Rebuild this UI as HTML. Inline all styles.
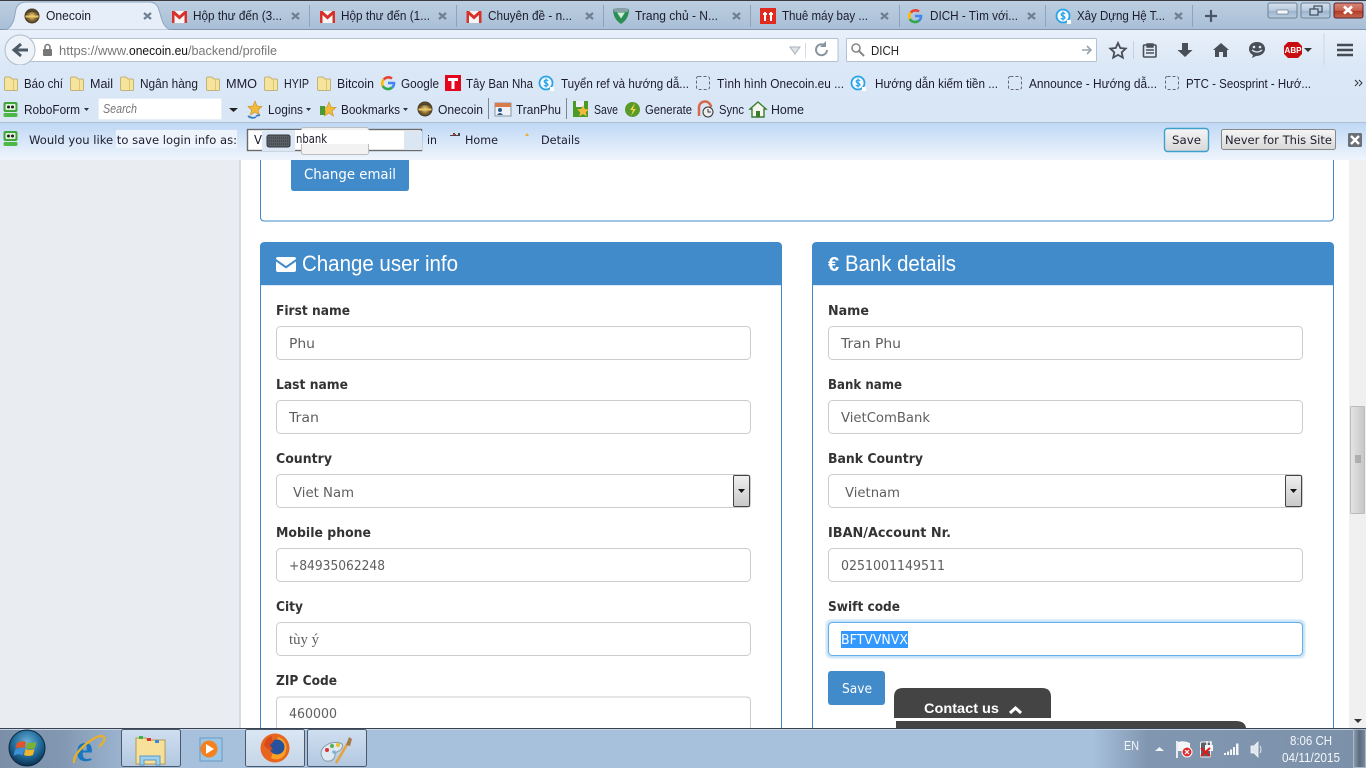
<!DOCTYPE html>
<html lang="vi"><head><meta charset="utf-8"><title>Onecoin</title>
<style>
html,body{margin:0;padding:0;width:1366px;height:768px;overflow:hidden;background:#fff}
svg{display:block}
.c{font:13px "Liberation Sans","Noto Sans CJK SC",sans-serif;fill:#1c1c2c}
.d{font:11.500px "DejaVu Sans",sans-serif;fill:#1c1c2c}
.l{font:bold 13.500px "DejaVu Sans",sans-serif;fill:#333}
.i{font:13.500px "DejaVu Sans",sans-serif;fill:#5e5e5e}
.h{font:22px "Liberation Sans",sans-serif;fill:#fff}
.b{font:13.500px "DejaVu Sans",sans-serif;fill:#fff}
.t{font:12.500px "Liberation Sans",sans-serif;fill:#f4f8fc}
.x{stroke:#6f7f90;stroke-width:2.200;fill:none}
</style></head><body>
<svg width="1366" height="768" viewBox="0 0 1366 768" xmlns="http://www.w3.org/2000/svg">
<defs>
<linearGradient id="strip" x1="0" y1="0" x2="0" y2="1"><stop offset="0" stop-color="#bdcfe1"/><stop offset="1" stop-color="#a9bfd7"/></linearGradient>
<linearGradient id="bar" x1="0" y1="0" x2="0" y2="1"><stop offset="0" stop-color="#e8f0fa"/><stop offset="1" stop-color="#dce8f6"/></linearGradient>
<linearGradient id="note" x1="0" y1="0" x2="0" y2="1"><stop offset="0" stop-color="#bfd8f5"/><stop offset="1" stop-color="#eff5fc"/></linearGradient>
<linearGradient id="task" x1="0" y1="0" x2="1" y2="0"><stop offset="0" stop-color="#7b8fa8"/><stop offset=".045" stop-color="#8298b2"/><stop offset=".11" stop-color="#a7c0dc"/><stop offset=".44" stop-color="#a7c0dc"/><stop offset=".6" stop-color="#a7c0dc"/><stop offset=".8" stop-color="#a7c0dc"/><stop offset=".84" stop-color="#8197b1"/><stop offset="1" stop-color="#7c90a9"/></linearGradient>
<linearGradient id="tb" x1="0" y1="0" x2="0" y2="1"><stop offset="0" stop-color="#cfdff0"/><stop offset="1" stop-color="#b2c8e0"/></linearGradient>
<linearGradient id="sel" x1="0" y1="0" x2="0" y2="1"><stop offset="0" stop-color="#f0f0f0"/><stop offset="1" stop-color="#c8c8c8"/></linearGradient>
<linearGradient id="btn" x1="0" y1="0" x2="0" y2="1"><stop offset="0" stop-color="#f5f5f5"/><stop offset="1" stop-color="#d8d8d8"/></linearGradient>
<linearGradient id="thumb" x1="0" y1="0" x2="1" y2="0"><stop offset="0" stop-color="#e4e4e4"/><stop offset="1" stop-color="#c6c6c6"/></linearGradient>
<linearGradient id="sd" x1="0" y1="0" x2="1" y2="0"><stop offset="0" stop-color="#8d9eb2"/><stop offset=".5" stop-color="#5b6b7e"/><stop offset="1" stop-color="#7b8b9e"/></linearGradient>
<linearGradient id="win" x1="0" y1="0" x2="0" y2="1"><stop offset="0" stop-color="#d4e0ee"/><stop offset=".5" stop-color="#b8cade"/><stop offset=".55" stop-color="#9db4cd"/><stop offset="1" stop-color="#b8cde2"/></linearGradient>
<linearGradient id="red" x1="0" y1="0" x2="0" y2="1"><stop offset="0" stop-color="#d98a7c"/><stop offset=".5" stop-color="#c8604e"/><stop offset=".55" stop-color="#b23a26"/><stop offset="1" stop-color="#c66a52"/></linearGradient>
<radialGradient id="coin" cx=".5" cy=".5" r=".5"><stop offset="0" stop-color="#f0d98c"/><stop offset=".6" stop-color="#8a6a2c"/><stop offset="1" stop-color="#3a3226"/></radialGradient>
<radialGradient id="orb" cx=".5" cy=".35" r=".65"><stop offset="0" stop-color="#6fb4d8"/><stop offset=".6" stop-color="#1f6a9a"/><stop offset="1" stop-color="#0c2e4c"/></radialGradient>
<symbol id="fold" viewBox="0 0 14 15" overflow="visible"><path d="M.5 2.500Q.5 1 2 1h4l2 2h4.500q1 0 1 1v9.500q0 1-1 1H2q-1.500 0-1.500-1.500z" fill="#f6e39c" stroke="#c2b27c"/><path d="M9.500 3v11" stroke="#dcc672"/></symbol>
<symbol id="gm" viewBox="0 0 15 13" overflow="visible"><path d="M0 1h15v12H0z" fill="#f6f6f6"/><path d="M0 13V1h2.500l5 4.500 5-4.500H15v12h-2.500V5l-5 4.500L2.500 5v8z" fill="#d8302a"/></symbol>
<symbol id="dash" viewBox="0 0 14 14" overflow="visible"><rect x=".5" y=".5" width="13" height="13" rx="2" fill="none" stroke="#667" stroke-dasharray="3 2"/></symbol>
<symbol id="sc" viewBox="0 0 16 16" overflow="visible"><circle cx="8" cy="8" r="6.500" fill="#f4f9fe" stroke="#29a3e8" stroke-width="1.800"/><rect x="12" y="12" width="4" height="4" fill="#fff"/><path d="M10.200 5.800Q8 4.300 6.300 5.800 6 7.500 8 8t1.800 2.300Q8 11.800 5.800 10.300M8 3.500v9" stroke="#29a3e8" stroke-width="1.200" fill="none"/></symbol>
<symbol id="gg" viewBox="0 0 16 16" overflow="visible"><path d="M3.800 4.500A6 6 0 0 1 12 3.500" stroke="#e8412f" stroke-width="2.600" fill="none"/><path d="M2.800 11A6 6 0 0 1 3.800 4.500" stroke="#f7bb08" stroke-width="2.600" fill="none"/><path d="M12 12.500A6 6 0 0 1 2.800 11" stroke="#2fa84f" stroke-width="2.600" fill="none"/><path d="M8 8h6q.2 3-2 4.500" stroke="#4285f4" stroke-width="2.600" fill="none"/></symbol>
<symbol id="rf" viewBox="0 0 15 15" overflow="visible"><rect x=".5" y="0" width="14" height="10" rx="2" fill="#3fa63a"/><rect x="2.500" y="2" width="10" height="6" rx="1" fill="#dff3d8"/><circle cx="5.500" cy="5" r="1.500" fill="#222"/><circle cx="9.500" cy="5" r="1.500" fill="#222"/><rect x=".5" y="11" width="14" height="4" rx="1.500" fill="#4cb944"/></symbol>
<symbol id="cn" viewBox="0 0 16 16" overflow="visible"><circle cx="8" cy="8" r="7.500" fill="url(#coin)"/><path d="M1.500 7.500h13v2h-13z" fill="#e9c767"/><path d="M3 4.500q5-2.500 10 0" stroke="#4a4030" stroke-width="1.500" fill="none"/></symbol>
</defs>

<!-- page background -->
<rect width="1366" height="768" fill="#fff"/>
<rect x="0" y="160" width="239" height="568" fill="#e9edf1"/>
<rect x="239" y="160" width="2" height="568" fill="#d3dbe3"/>
<rect x="1349" y="160" width="17" height="568" fill="#f0f0f0"/>
<rect x="1350.500" y="406.500" width="14" height="107" rx="1" fill="url(#thumb)" stroke="#bcbcbc"/>
<path d="M1355 456h6M1355 458h6M1355 460h6M1355 462h6" stroke="#888"/>
<path d="M1354 719h8l-4 4z" fill="#333"/>

<!-- tab strip -->
<rect width="1366" height="29" fill="url(#strip)"/>
<rect width="1366" height="1" fill="#3a3c40"/>
<rect y="29" width="1366" height="1" fill="#8094ab"/>
<path d="M4 30Q11 29 14 19L16 9Q18 2 27 2H149Q157 2 159 10L162 20Q165 29 172 30z" fill="#e5eef9" stroke="#8fa5bd"/>
<g stroke="#8fa4ba"><path d="M309.500 5v22M456.500 5v22M603.500 5v22M750.500 5v22M899.500 5v22M1045.500 5v22M1192.500 5v22"/></g>
<use href="#cn" x="24" y="8" width="16" height="16"/>
<use href="#gm" x="172" y="10" width="15" height="13"/>
<use href="#gm" x="320" y="10" width="15" height="13"/>
<use href="#gm" x="466" y="10" width="16" height="13"/>
<path d="M613 9q8-2 16 0 0 10-8 15-8-5-8-15z" fill="#2b8f55"/><path d="M613 9q8-2 16 0l-1.500 3h-13z" fill="#8aa0a8"/><path d="M617 12.500h8l-4 6z" fill="#cfeeda"/>
<rect x="760" y="8" width="16" height="16" fill="#e02a1e"/><path d="M765 12v9M771 12v9M763 14h4M769 14h4" stroke="#fff" stroke-width="2"/>
<use href="#gg" x="907" y="8" width="16" height="16"/>
<use href="#sc" x="1055" y="8" width="16" height="16"/>
<g class="c">
<text x="46" y="20" textLength="45" lengthAdjust="spacingAndGlyphs">Onecoin</text>
<text x="193" y="20" textLength="89" lengthAdjust="spacingAndGlyphs">Hộp thư đến (3...</text>
<text x="341" y="20" textLength="89" lengthAdjust="spacingAndGlyphs">Hộp thư đến (1...</text>
<text x="488" y="20" textLength="84" lengthAdjust="spacingAndGlyphs">Chuyên đề - n...</text>
<text x="635" y="20" textLength="83" lengthAdjust="spacingAndGlyphs">Trang chủ - N...</text>
<text x="782" y="20" textLength="86" lengthAdjust="spacingAndGlyphs">Thuê máy bay ...</text>
<text x="930" y="20" textLength="88" lengthAdjust="spacingAndGlyphs">DICH - Tìm với...</text>
<text x="1077" y="20" textLength="88" lengthAdjust="spacingAndGlyphs">Xây Dựng Hệ T...</text>
</g>
<path class="x" d="M144 13l7 6M151 13l-7 6M292 13l7 6M299 13l-7 6M439 13l7 6M446 13l-7 6M586 13l7 6M593 13l-7 6M733 13l7 6M740 13l-7 6M881 13l7 6M888 13l-7 6M1028 13l7 6M1035 13l-7 6M1175 13l7 6M1182 13l-7 6"/>
<path d="M1211 10v12M1205 16h12" stroke="#4a5568" stroke-width="2.200"/>
<!-- window buttons -->
<rect x="1268" y="3" width="29" height="15" rx="2" fill="url(#win)" stroke="#6e7f92"/>
<rect x="1277" y="10" width="11" height="4" fill="#f5f8fb" stroke="#5a6a7a" stroke-width=".6"/>
<rect x="1301" y="3" width="29" height="15" rx="2" fill="url(#win)" stroke="#6e7f92"/>
<rect x="1314" y="6" width="8" height="6" fill="none" stroke="#3e4d5e" stroke-width="1.200"/><rect x="1310" y="9" width="8" height="6" fill="#c3d3e3" stroke="#3e4d5e" stroke-width="1.200"/>
<rect x="1334" y="3" width="29" height="15" rx="2" fill="url(#red)" stroke="#5a2030"/>
<path d="M1344 6.500l8 7M1352 6.500l-8 7" stroke="#fff" stroke-width="2.800"/>

<!-- nav toolbar -->
<rect y="30" width="1366" height="35" fill="url(#bar)"/>
<rect x="30" y="38.500" width="808" height="23" rx="1" fill="#fff" stroke="#b3c2d2"/>
<circle cx="20" cy="50" r="15" fill="#eef3f9" stroke="#aebccb"/>
<path d="M28 50H16M21 44l-7 6 7 6" stroke="#4d5a68" stroke-width="3" fill="none"/>
<rect x="43" y="49" width="9" height="7" rx="1" fill="#777"/><path d="M45 49v-2a2.500 2.500 0 0 1 5 0v2" stroke="#777" stroke-width="1.500" fill="none"/>
<g class="c">
<text x="59" y="55" textLength="70" lengthAdjust="spacingAndGlyphs" style="fill:#777">https://www.</text>
<text x="129" y="55" textLength="59" lengthAdjust="spacingAndGlyphs" style="fill:#111">onecoin.eu</text>
<text x="188" y="55" textLength="89" lengthAdjust="spacingAndGlyphs" style="fill:#777">/backend/profile</text>
</g>
<path d="M790 47h10l-5 7z" fill="#dfe3e8" stroke="#a8b0ba"/>
<path d="M805.500 43v15" stroke="#d4dbe3"/>
<path d="M827 50a5.500 5.500 0 1 1-2-4.500" stroke="#8a949e" stroke-width="2" fill="none"/><path d="M826 41v6h-6z" fill="#8a949e"/>
<rect x="846.500" y="38.500" width="250" height="23" rx="1" fill="#fff" stroke="#b3c2d2"/>
<circle cx="856" cy="48" r="4" fill="none" stroke="#888" stroke-width="1.600"/><path d="M859 51l5 5" stroke="#888" stroke-width="2"/>
<text class="c" x="871" y="55" textLength="28" lengthAdjust="spacingAndGlyphs" style="fill:#222">DICH</text>
<path d="M1082 50h9M1087 46l4 4-4 4" stroke="#9aa3ad" stroke-width="1.600" fill="none"/>
<path d="M1118 43l2.300 5 5.400.6-4 3.700 1.100 5.300-4.800-2.700-4.800 2.700 1.100-5.300-4-3.700 5.400-.6z" fill="none" stroke="#4a4f57" stroke-width="1.800"/>
<path d="M1133.500 41v18" stroke="#c5d0dc"/>
<rect x="1143.500" y="45" width="12.500" height="12" rx="1" fill="none" stroke="#4a4f57" stroke-width="1.600"/><path d="M1147 44h6v3h-6zM1146 50h8M1146 53h8" stroke="#4a4f57" stroke-width="1.400" fill="#4a4f57"/>
<path d="M1182 43h6v7h4.500l-7.500 7-7.500-7h4.500z" fill="#4a4f57"/>
<path d="M1221 43l8 7h-2v7h-4v-5h-4v5h-4v-7h-2z" fill="#4a4f57"/>
<path d="M1257 42c-5 0-8 3-8 7 0 3 2 5 4 6l-1 3 4-2c5 0 9-3 9-7s-3-7-8-7z" fill="#4a4f57"/><circle cx="1254" cy="47" r="1.300" fill="#dce8f6"/><circle cx="1260" cy="47" r="1.300" fill="#dce8f6"/><path d="M1252 50q5 4 10 0" stroke="#dce8f6" stroke-width="1.300" fill="none"/>
<path d="M1288 42h10l4 4v8l-4 4h-10l-4-4v-8z" fill="#c80c10"/>
<text x="1284.500" y="53" textLength="17" lengthAdjust="spacingAndGlyphs" style="font:bold 8.500px 'Liberation Sans',sans-serif;fill:#fff">ABP</text>
<path d="M1304 48h8l-4 4z" fill="#333"/>
<path d="M1324 33v32" stroke="#cdd8e4"/>
<path d="M1337 45h16M1337 50h16M1337 55h16" stroke="#454c55" stroke-width="2.600"/>

<!-- bookmarks -->
<rect y="65" width="1366" height="31" fill="#dae7f6"/>
<use href="#fold" x="4" y="76" width="14" height="15"/><use href="#fold" x="70" y="76" width="14" height="15"/><use href="#fold" x="120" y="76" width="14" height="15"/><use href="#fold" x="206" y="76" width="14" height="15"/><use href="#fold" x="264" y="76" width="14" height="15"/><use href="#fold" x="317" y="76" width="14" height="15"/>
<use href="#gg" x="380" y="75" width="16" height="16"/>
<rect x="445" y="75" width="16" height="16" fill="#e3061c"/><path d="M448 78h10v3h-3.500v8h-3v-8H448z" fill="#fff"/>
<use href="#sc" x="538" y="75" width="16" height="16"/><use href="#sc" x="850" y="75" width="16" height="16"/>
<use href="#dash" x="696" y="76" width="14" height="14"/><use href="#dash" x="1008" y="76" width="14" height="14"/><use href="#dash" x="1165" y="76" width="14" height="14"/>
<g class="c">
<text x="24" y="88" textLength="39" lengthAdjust="spacingAndGlyphs">Báo chí</text>
<text x="90" y="88" textLength="23" lengthAdjust="spacingAndGlyphs">Mail</text>
<text x="140" y="88" textLength="58" lengthAdjust="spacingAndGlyphs">Ngân hàng</text>
<text x="226" y="88" textLength="31" lengthAdjust="spacingAndGlyphs">MMO</text>
<text x="284" y="88" textLength="25" lengthAdjust="spacingAndGlyphs">HYIP</text>
<text x="337" y="88" textLength="37" lengthAdjust="spacingAndGlyphs">Bitcoin</text>
<text x="401" y="88" textLength="38" lengthAdjust="spacingAndGlyphs">Google</text>
<text x="466" y="88" textLength="67" lengthAdjust="spacingAndGlyphs">Tây Ban Nha</text>
<text x="561" y="88" textLength="128" lengthAdjust="spacingAndGlyphs">Tuyển ref và hướng dẫ...</text>
<text x="717" y="88" textLength="127" lengthAdjust="spacingAndGlyphs">Tình hình Onecoin.eu ...</text>
<text x="875" y="88" textLength="123" lengthAdjust="spacingAndGlyphs">Hướng dẫn kiếm tiền ...</text>
<text x="1029" y="88" textLength="128" lengthAdjust="spacingAndGlyphs">Announce - Hướng dẫ...</text>
<text x="1186" y="88" textLength="125" lengthAdjust="spacingAndGlyphs">PTC - Seosprint - Hướ...</text>
</g>
<path d="M1355 80l3 3-3 3M1359 80l3 3-3 3" stroke="#333" fill="none"/>

<!-- roboform row -->
<rect y="96" width="1366" height="26" fill="#d8e6f6"/>
<rect y="122" width="1366" height="1" fill="#afc0d2"/>
<use href="#rf" x="3" y="102" width="15" height="15"/>
<path d="M84 108h5l-2.500 3z" fill="#333"/>
<rect x="98.500" y="98.500" width="123" height="21" rx="1" fill="#fff" stroke="#e8eef5"/>
<text class="c" x="103" y="113" textLength="34" lengthAdjust="spacingAndGlyphs" style="font-style:italic;fill:#777">Search</text>
<path d="M229 108h9l-4.500 4z" fill="#222"/>
<path d="M255 101l2 5 5 .5-4 3.500 1.500 5-4.500-3-4.500 3 1-5-3.500-3.500 5-.5z" fill="#f2b93a" stroke="#c98c20" stroke-width=".6"/><path d="M248 116q4 3 8 1M256 116l4-1" stroke="#3a7fc4" stroke-width="1.800" fill="none"/>
<path d="M329 102l2 5 5 .5-4 3.500 1.500 5-4.500-3-4.500 3 1-5-3.500-3.500 5-.5z" fill="#f2b93a" stroke="#c98c20" stroke-width=".6"/><rect x="320" y="106" width="5" height="9" fill="#4a9a3a"/>
<path d="M306 108h5l-2.500 3zM403 108h5l-2.500 3z" fill="#333"/>
<use href="#cn" x="417" y="101" width="16" height="16"/>
<path d="M488.500 98v21M566.500 98v21" stroke="#7a8794"/>
<rect x="495" y="103" width="16" height="13" fill="#eef2f6" stroke="#8a95a0"/><rect x="495" y="103" width="16" height="4" fill="#d97a4a"/><circle cx="500" cy="110" r="2" fill="#2a5a8a"/><path d="M497 115q3-4 6 0" fill="#2a5a8a"/>
<rect x="573" y="101" width="15" height="16" fill="#4a9a2a"/><rect x="576" y="101" width="8" height="6" fill="#eef"/><path d="M583 105l1.800 4 4.200.4-3.200 2.800 1 4.200-3.800-2.300-3.800 2.300 1-4.200-3.200-2.800 4.200-.4z" fill="#f2b93a"/>
<circle cx="632.500" cy="109.500" r="7.500" fill="#5a9a2a"/><path d="M635 103l-5 7h3l-2 6 5-7h-3z" fill="#f5d442"/>
<path d="M699 116v-8a6 6 0 0 1 12-1" stroke="#d9694a" stroke-width="2.500" fill="none"/><circle cx="708" cy="112" r="5" fill="#eee" stroke="#333"/><path d="M708 109v3h3" stroke="#333" fill="none"/>
<path d="M758 102l8 7h-2v8h-12v-8h-2z" fill="#f4f7f0" stroke="#3d7a2e" stroke-width="1.400"/><rect x="756" y="111" width="4" height="6" fill="#3d7a2e"/>
<g class="c">
<text x="24" y="114" textLength="56" lengthAdjust="spacingAndGlyphs">RoboForm</text>
<text x="268" y="114" textLength="35" lengthAdjust="spacingAndGlyphs">Logins</text>
<text x="341" y="114" textLength="59" lengthAdjust="spacingAndGlyphs">Bookmarks</text>
<text x="438" y="114" textLength="45" lengthAdjust="spacingAndGlyphs">Onecoin</text>
<text x="516" y="114" textLength="45" lengthAdjust="spacingAndGlyphs">TranPhu</text>
<text x="594" y="114" textLength="24" lengthAdjust="spacingAndGlyphs">Save</text>
<text x="645" y="114" textLength="47" lengthAdjust="spacingAndGlyphs">Generate</text>
<text x="719" y="114" textLength="25" lengthAdjust="spacingAndGlyphs">Sync</text>
<text x="771" y="114" textLength="33" lengthAdjust="spacingAndGlyphs">Home</text>
</g>

<!-- notification bar -->
<rect y="123" width="1366" height="37" fill="url(#note)"/>
<use href="#rf" x="3" y="131" width="15" height="15"/>
<rect x="116" y="130" width="121" height="18" fill="#eef4fc"/>
<g class="d">
<text x="29" y="144" textLength="208" lengthAdjust="spacingAndGlyphs">Would you like to save login info as:</text>
<text x="427" y="144" textLength="10" lengthAdjust="spacingAndGlyphs">in</text>
<text x="465" y="144" textLength="33" lengthAdjust="spacingAndGlyphs">Home</text>
<text x="541" y="144" textLength="39" lengthAdjust="spacingAndGlyphs">Details</text>
</g>
<rect x="247.500" y="129.500" width="174" height="21" fill="#fff" stroke="#6b6b6b" stroke-width="1.400"/>
<rect x="404" y="131" width="18" height="19" fill="#dbe6f3"/>
<rect x="301.500" y="127.500" width="67" height="27" rx="2" fill="#f2f2f2" stroke="#bdbdbd"/>
<rect x="295" y="130" width="74" height="14" fill="#fff"/>
<rect x="369" y="131" width="35" height="15" fill="#fff"/>
<text x="254" y="144" textLength="8" lengthAdjust="spacingAndGlyphs" style="font:12.500px 'DejaVu Sans',sans-serif;fill:#1c1c2c">V</text>
<rect x="262" y="130" width="33" height="21" fill="#dce8f6"/>
<rect x="267" y="135" width="23" height="12" rx="2" fill="#5a6068" stroke="#30343a"/><path d="M269 138h19M269 141h19M269 144h19" stroke="#333" stroke-dasharray="1 1"/>
<text x="296" y="143" textLength="31" lengthAdjust="spacingAndGlyphs" style="font:12.500px 'DejaVu Sans',sans-serif;fill:#1c1c2c">nbank</text>
<path d="M450 135h3v-2h2v2h3v-2h2v3h-10z" fill="#444"/><path d="M453 134h3v1h-3z" fill="#d33"/>
<path d="M525 136l2-3 2 3z" fill="#e8ad3a"/>
<rect x="1164.500" y="128.500" width="44" height="23" rx="3" fill="url(#btn)" stroke="#3fa0d0" stroke-width="1.400"/>
<rect x="1221.500" y="129.500" width="114" height="20" rx="2" fill="url(#btn)" stroke="#888"/>
<g class="d">
<text x="1172" y="144" textLength="29" lengthAdjust="spacingAndGlyphs">Save</text>
<text x="1225" y="144" textLength="107" lengthAdjust="spacingAndGlyphs">Never for This Site</text>
</g>
<rect x="1348" y="133" width="14" height="14" rx="1.500" fill="#6b7078"/><path d="M1351 136l8 8M1359 136l-8 8" stroke="#fff" stroke-width="2.400"/>

<!-- top panel -->
<path d="M260.500 160v57q0 4 4 4h1065q4 0 4-4v-57" fill="#fff" stroke="#428bca"/>
<path d="M291 160h118v28q0 3-3 3H294q-3 0-3-3z" fill="#428bca"/>
<text class="b" x="304" y="179" textLength="92" lengthAdjust="spacingAndGlyphs" style="font-size:14px">Change email</text>

<!-- left panel -->
<path d="M260.500 728V247q0-4.500 4.500-4.500h512q4.500 0 4.500 4.500v481" fill="#fff" stroke="#428bca"/>
<path d="M260 285v-38q0-5 5-5h512q5 0 5 5v38z" fill="#428bca"/>
<rect x="261" y="285" width="520" height="1" fill="#dbe9f5"/>
<path d="M276 259q0-2 2-2h16q2 0 2 2l-10 7zM276 261.500V270q0 2 2 2h16q2 0 2-2v-8.500l-10 7z" fill="#fff"/>
<text class="h" x="302" y="271" textLength="156" lengthAdjust="spacingAndGlyphs">Change user info</text>
<!-- right panel -->
<path d="M812.500 728V247q0-4.500 4.500-4.500h512q4.500 0 4.500 4.500v481" fill="#fff" stroke="#428bca"/>
<path d="M812 285v-38q0-5 5-5h512q5 0 5 5v38z" fill="#428bca"/>
<rect x="813" y="285" width="520" height="1" fill="#dbe9f5"/>
<text x="828" y="271" style="font:bold 20px 'Liberation Sans',sans-serif;fill:#fff">€</text>
<text class="h" x="845" y="271" textLength="111" lengthAdjust="spacingAndGlyphs">Bank details</text>

<!-- labels -->
<g class="l">
<text x="276" y="315" textLength="74" lengthAdjust="spacingAndGlyphs">First name</text>
<text x="276" y="389" textLength="72" lengthAdjust="spacingAndGlyphs">Last name</text>
<text x="276" y="463" textLength="56" lengthAdjust="spacingAndGlyphs">Country</text>
<text x="276" y="537" textLength="95" lengthAdjust="spacingAndGlyphs">Mobile phone</text>
<text x="276" y="611" textLength="27" lengthAdjust="spacingAndGlyphs">City</text>
<text x="276" y="685" textLength="61" lengthAdjust="spacingAndGlyphs">ZIP Code</text>
<text x="828" y="315" textLength="41" lengthAdjust="spacingAndGlyphs">Name</text>
<text x="828" y="389" textLength="74" lengthAdjust="spacingAndGlyphs">Bank name</text>
<text x="828" y="463" textLength="95" lengthAdjust="spacingAndGlyphs">Bank Country</text>
<text x="828" y="537" textLength="123" lengthAdjust="spacingAndGlyphs">IBAN/Account Nr.</text>
<text x="828" y="611" textLength="72" lengthAdjust="spacingAndGlyphs">Swift code</text>
</g>
<!-- inputs -->
<g fill="#fff" stroke="#ccc">
<rect x="276.500" y="326.500" width="474" height="33" rx="4"/>
<rect x="276.500" y="400.500" width="474" height="33" rx="4"/>
<rect x="276.500" y="474.500" width="474" height="33" rx="4"/>
<rect x="276.500" y="548.500" width="474" height="33" rx="4"/>
<rect x="276.500" y="622.500" width="474" height="33" rx="4"/>
<path d="M276.500 728v-27q0-4 4-4h466q4 0 4 4v27"/>
<rect x="828.500" y="326.500" width="474" height="33" rx="4"/>
<rect x="828.500" y="400.500" width="474" height="33" rx="4"/>
<rect x="828.500" y="474.500" width="474" height="33" rx="4"/>
<rect x="828.500" y="548.500" width="474" height="33" rx="4"/>
</g>
<rect x="825" y="619" width="481" height="40" rx="6" fill="#66afe9" opacity=".18"/>
<rect x="826.500" y="620.500" width="478" height="37" rx="5" fill="#66afe9" opacity=".22"/>
<rect x="828.500" y="622.500" width="474" height="33" rx="4" fill="#fff" stroke="#66afe9"/>
<rect x="841" y="631" width="67" height="17" fill="#3399ff"/>
<!-- select arrows -->
<rect x="733.500" y="475.500" width="16" height="31" rx="1" fill="url(#sel)" stroke="#444"/><path d="M738 489h7l-3.500 4z" fill="#111"/>
<rect x="1285.500" y="475.500" width="16" height="31" rx="1" fill="url(#sel)" stroke="#444"/><path d="M1290 489h7l-3.500 4z" fill="#111"/>
<g class="i">
<text x="289" y="348" textLength="26" lengthAdjust="spacingAndGlyphs">Phu</text>
<text x="289" y="422" textLength="30" lengthAdjust="spacingAndGlyphs">Tran</text>
<text x="293" y="497" textLength="61" lengthAdjust="spacingAndGlyphs">Viet Nam</text>
<text x="289" y="570" textLength="96" lengthAdjust="spacingAndGlyphs">+84935062248</text>
<text x="289" y="644" textLength="30" lengthAdjust="spacingAndGlyphs" style="font-family:'Liberation Serif',serif;font-size:14.500px">tùy ý</text>
<text x="289" y="718" textLength="48" lengthAdjust="spacingAndGlyphs">460000</text>
<text x="841" y="348" textLength="60" lengthAdjust="spacingAndGlyphs">Tran Phu</text>
<text x="841" y="422" textLength="89" lengthAdjust="spacingAndGlyphs">VietComBank</text>
<text x="845" y="497" textLength="55" lengthAdjust="spacingAndGlyphs">Vietnam</text>
<text x="841" y="570" textLength="104" lengthAdjust="spacingAndGlyphs">0251001149511</text>
<text x="841" y="644" textLength="67" lengthAdjust="spacingAndGlyphs" style="fill:#fff">BFTVVNVX</text>
</g>
<rect x="828" y="671" width="57" height="34" rx="3" fill="#428bca"/>
<text class="b" x="842" y="693" textLength="30" lengthAdjust="spacingAndGlyphs">Save</text>
<!-- contact -->
<path d="M894 718v-21q0-9 9-9h139q9 0 9 9v21z" fill="#444"/>
<text x="924" y="713" textLength="75" lengthAdjust="spacingAndGlyphs" style="font:bold 14px 'Liberation Sans',sans-serif;fill:#fff">Contact us</text>
<path d="M1010 713l5.500-5 5.500 5" stroke="#fff" stroke-width="3" fill="none"/>
<path d="M896 728v-7h340q9 0 10 7z" fill="#444"/>

<!-- taskbar -->
<rect y="728" width="1366" height="40" fill="url(#task)"/>
<rect y="728" width="1366" height="1" fill="#39424e"/>
<rect y="729" width="1366" height="1" fill="#c5d5e6"/>
<circle cx="27" cy="748" r="18" fill="url(#orb)" stroke="#0e2a42"/>
<path d="M17 743q4-3 9-1l-1.500 6q-5-2-9 1z" fill="#e0562a"/><path d="M27.500 742q4 2 9 0l-1.500 6q-5 2-9 0z" fill="#7cb32e"/><path d="M15 750q4-3 9-1l-1.500 6q-5-2-9 1z" fill="#3d8fd8"/><path d="M25.500 749q4 2 9 0l-1.500 6q-5 2-9 0z" fill="#f0b52a"/>
<text x="76" y="761" style="font:bold 38px 'Liberation Serif',serif;fill:#1777c2">e</text>
<path d="M74 763q-1-8 12-19 14-11 18-7 2 3-5 10" fill="none" stroke="#eab122" stroke-width="2.200"/>
<rect x="121.500" y="729.500" width="59" height="37" rx="2" fill="url(#tb)" stroke="#4a5a6c"/>
<path d="M136 738h10l2 2h17v24h-29z" fill="#f6e09a" stroke="#b59a52"/><rect x="139" y="736" width="4" height="3" fill="#3fb24a"/><rect x="147" y="738" width="4" height="3" fill="#d33"/><rect x="155" y="740" width="4" height="3" fill="#3a8ad8"/>
<path d="M140 765v-9h20v9h-4v-5h-12v5z" fill="#9fd0ec" stroke="#5a9ac8"/>
<rect x="200" y="738" width="22" height="23" fill="#9cc6e6" stroke="#6a9ac4"/>
<circle cx="209" cy="749" r="8.500" fill="#f4801e"/><path d="M206 744v10l8-5z" fill="#fff"/>
<rect x="245.500" y="729.500" width="59" height="37" rx="2" fill="url(#tb)" stroke="#4a5a6c"/><rect x="246" y="730" width="58" height="36" fill="#fff" opacity=".25"/>
<circle cx="275" cy="748" r="14.500" fill="#e8651f"/>
<path d="M278 737a11 11 0 0 1 8 14 10 10 0 0 1-15 7" fill="#f8a125"/><circle cx="277" cy="747" r="7.500" fill="#26519b"/><path d="M264 745q2-8 8-9-1 4 2 5l-4 4 3 5q-6 0-9-5z" fill="#d84a1a"/>
<rect x="307.500" y="729.500" width="59" height="37" rx="2" fill="url(#tb)" stroke="#4a5a6c"/>
<path d="M322 757q-3-6 3-11 7-5 15-3 4 1 2 5-1 2-3 3-4 1-4 4-1 7-9 6-3-1-4-4z" fill="#dfe9f2" stroke="#8a9aaa"/><circle cx="327" cy="750" r="2" fill="#d33"/><circle cx="332" cy="746" r="2" fill="#5ab04a"/><circle cx="338" cy="745" r="2" fill="#e8c22a"/><circle cx="334" cy="752" r="1.800" fill="#7ab4dc"/>
<path d="M336 763l12-20" stroke="#e8a23a" stroke-width="2.500"/><path d="M346 745l3-8 3 2-2 7z" fill="#a87a4a"/>

<g class="t">
<text x="1124" y="750" textLength="15" lengthAdjust="spacingAndGlyphs">EN</text>
<text x="1290" y="745" textLength="42" lengthAdjust="spacingAndGlyphs">8:06 CH</text>
<text x="1282" y="762" textLength="58" lengthAdjust="spacingAndGlyphs">04/11/2015</text>
</g>
<path d="M1155 751l4.500-4 4.500 4z" fill="#f0f4f8"/>
<path d="M1177 741v17" stroke="#f4f6f8" stroke-width="1.800"/><path d="M1178 742q6-2 12 1v8h-12z" fill="#f4f6f8"/><circle cx="1187" cy="752" r="5" fill="#d83030" stroke="#fff"/><path d="M1185 750l4 4M1189 750l-4 4" stroke="#fff" stroke-width="1.200"/>
<rect x="1200.500" y="742" width="10" height="15" rx="1.500" fill="#5a6068" stroke="#f0f0f0"/><path d="M1205 745h8v6h-8z" fill="#f4f6f8"/><path d="M1207 741v4M1211 741v4" stroke="#f4f6f8" stroke-width="1.500"/><path d="M1201 748l9 8M1210 748l-9 8" stroke="#e01818" stroke-width="2"/>
<path d="M1224 753h2v2h-2zM1227 751.500h2v3.500h-2zM1230 749.500h2v5.500h-2zM1233 747h2v8h-2zM1236 743.500h2.500v11.500H1236z" fill="#f4f6f8"/>
<path d="M1251 746h3l4-4v15l-4-4h-3z" fill="#dfe6ee" stroke="#f4f6f8" stroke-width=".8"/><path d="M1260 746q2 3.500 0 7" stroke="#e0e6ec" fill="none"/>
<rect x="1353.500" y="729.500" width="12" height="38" fill="url(#sd)" stroke="#a9b7c6"/>
</svg>
</body></html>
